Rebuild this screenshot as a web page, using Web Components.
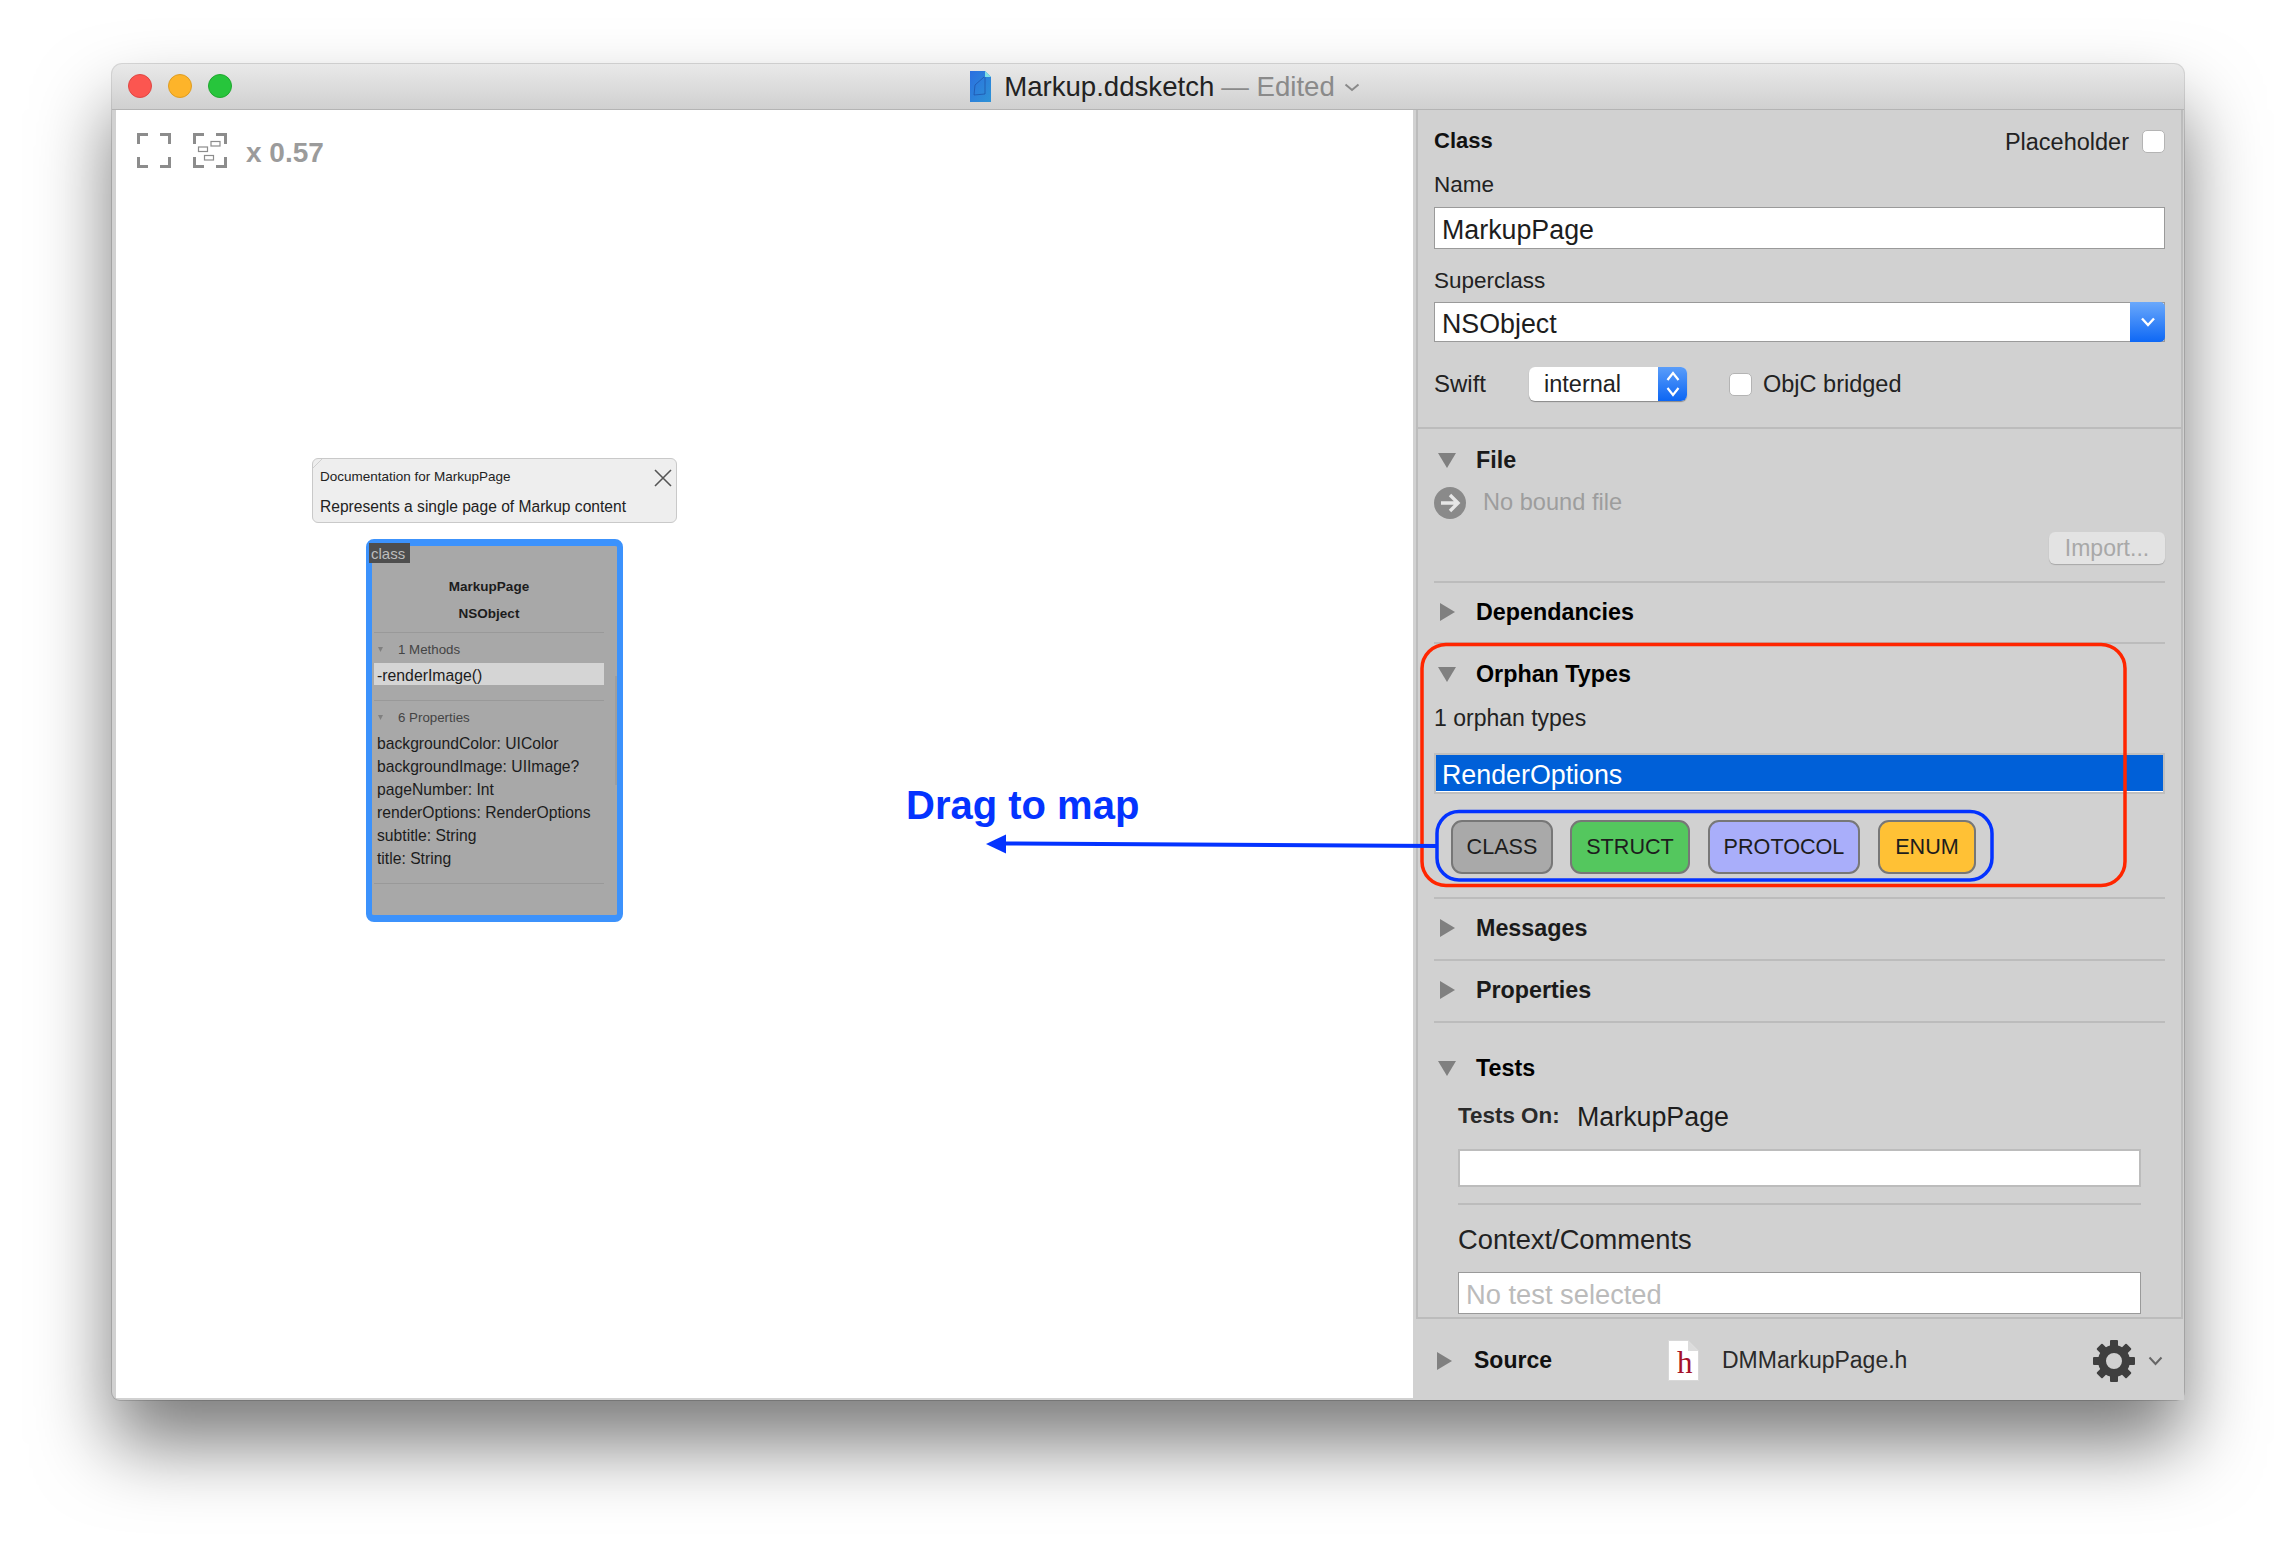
<!doctype html>
<html>
<head>
<meta charset="utf-8">
<title>Markup.ddsketch</title>
<style>
  html, body { margin: 0; background: #fff; }
  body { width: 2296px; height: 1560px; overflow: hidden; position: relative; font-family: "Liberation Sans", Arial, sans-serif; color: #222; }
</style>
</head>
<body>
<mac-window>
  <map-canvas slot="canvas">
    <doc-note style="left:196px;top:348px" heading="Documentation for MarkupPage">Represents a single page of Markup content</doc-note>
    <class-card style="left:250px;top:429px"></class-card>
  </map-canvas>
  <inspector-panel slot="panel"></inspector-panel>
</mac-window>
<map-annotations></map-annotations>

<script>
const triangle = (open) => open
  ? `<svg width="18" height="15" viewBox="0 0 18 15"><path d="M0 0H18L9 15Z" fill="#808080"/></svg>`
  : `<svg width="18" height="18" viewBox="0 0 18 18"><path d="M2 0L17 9L2 18Z" fill="#808080"/></svg>`;

class MacWindow extends HTMLElement {
  connectedCallback() {
    this.attachShadow({ mode: "open" });
    this.shadowRoot.innerHTML = `
      <style>
        :host {
          display: flex;
          flex-direction: column;
          box-sizing: border-box;
          position: absolute;
          left: 112px;
          top: 64px;
          width: 2072px;
          height: 1336px;
          background: #d1d1d1;
          border-radius: 10px 10px 8px 8px;
          box-shadow: 0 0 0 1px rgba(0, 0, 0, 0.14), 0 44px 76px rgba(0, 0, 0, 0.52);
          overflow: visible;
        }
        #bar {
          height: 46px;
          flex: none;
          display: flex;
          align-items: center;
          justify-content: center;
          position: relative;
          background: linear-gradient(#e9e9e9, #d0d0d0);
          border-radius: 10px 10px 0 0;
          border-bottom: 1px solid #b4b4b4;
          box-sizing: border-box;
          font-size: 27.6px;
          color: #222;
        }
        #lights {
          position: absolute;
          left: 16px;
          top: 10px;
          display: flex;
          gap: 16px;
        }
        #lights i {
          width: 24px;
          height: 24px;
          box-sizing: border-box;
          border-radius: 50%;
          border: 1px solid var(--edge);
          background: var(--fill);
        }
        #title {
          display: flex;
          align-items: center;
          margin-left: 34px;
        }
        #title svg.doc { margin-right: 13px; }
        #title .edited { color: #8a8a8a; margin-left: 7px; }
        #title svg.more { margin-left: 9px; margin-top: 2px; }
        #main {
          flex: 1;
          display: flex;
          min-height: 0;
          padding-left: 4px;
        }
        ::slotted([slot="canvas"]) { flex: none; }
        ::slotted([slot="panel"]) { flex: 1; }
      </style>
      <div id="bar">
        <div id="lights">
          <i style="--fill:#fc5650;--edge:#df4744"></i>
          <i style="--fill:#fdb42a;--edge:#de9d22"></i>
          <i style="--fill:#27c53c;--edge:#1fa82f"></i>
        </div>
        <div id="title">
          <svg class="doc" width="21" height="31" viewBox="0 0 21 31">
            <defs><linearGradient id="docfill" x1="0" y1="0" x2="1" y2="1"><stop offset="0" stop-color="#2b6fe0"/><stop offset="1" stop-color="#2d93d6"/></linearGradient></defs>
            <path d="M0 0H15L21 6V31H0Z" fill="url(#docfill)"/>
            <path d="M15 0L21 6H15Z" fill="#7fe0e4"/>
            <path d="M14 6L5 14L4 24L15 23L15 6" fill="none" stroke="#1d4fa5" stroke-width=".7"/>
          </svg>
          <span>Markup.ddsketch</span><span class="edited">— Edited</span>
          <svg class="more" width="16" height="9" viewBox="0 0 16 9"><path d="M1.5 1.5L8 7L14.5 1.5" fill="none" stroke="#8a8a8a" stroke-width="2"/></svg>
        </div>
      </div>
      <div id="main">
        <slot name="canvas"></slot>
        <slot name="panel"></slot>
      </div>
    `;
  }
}

class MapCanvas extends HTMLElement {
  connectedCallback() {
    this.attachShadow({ mode: "open" });
    const corners = `<path d="M1.5 11V1.5H11M23 1.5H32.5V11M1.5 24V33.5H11M23 33.5H32.5V24" fill="none" stroke="#8c8c8c" stroke-width="3"/>`;
    this.shadowRoot.innerHTML = `
      <style>
        :host {
          display: block;
          position: relative;
          width: 1297px;
          height: 1288px;
          background: #fff;
        }
        #tools {
          display: flex;
          align-items: center;
          gap: 22px;
          padding: 22px 0 0 21px;
        }
        #zoom {
          font: bold 28px "Liberation Sans", Arial, sans-serif;
          color: #9b9b9b;
          margin-left: -3px;
          margin-top: 5px;
        }
      </style>
      <div id="tools">
        <svg width="34" height="35" viewBox="0 0 34 35">${corners}</svg>
        <svg width="34" height="35" viewBox="0 0 34 35">${corners}
          <g fill="#fff" stroke="#8c8c8c" stroke-width="1.2">
            <rect x="5.5" y="14" width="9" height="4.5"/>
            <rect x="18" y="8.5" width="9" height="4.5"/>
            <rect x="11.5" y="22.5" width="9" height="4.5"/>
          </g>
        </svg>
        <span id="zoom">x 0.57</span>
      </div>
      <slot></slot>
    `;
  }
}

class DocNote extends HTMLElement {
  connectedCallback() {
    this.attachShadow({ mode: "open" });
    this.shadowRoot.innerHTML = `
      <style>
        :host {
          display: block;
          position: absolute;
          box-sizing: border-box;
          width: 365px;
          height: 65px;
          padding: 9px 7px 0;
          background: #eeeeee;
          border: 1px solid #c9c9c9;
          border-radius: 6px;
          color: #222;
        }
        #head { font-size: 13.5px; line-height: 18px; }
        #body { font-size: 15.6px; line-height: 20px; margin-top: 11px; }
        #close { position: absolute; right: 4px; top: 10px; }
        #fold { position: absolute; left: 0; top: 0; }
      </style>
      <svg id="fold" width="10" height="10" viewBox="0 0 10 10"><path d="M0 9L9 0" stroke="#cfcfcf"/></svg>
      <div id="head">${this.getAttribute("heading")}</div>
      <div id="body"><slot></slot></div>
      <svg id="close" width="18" height="18" viewBox="0 0 18 18"><path d="M1 1L17 17M17 1L1 17" stroke="#555" stroke-width="1.6"/></svg>
    `;
  }
}

class ClassCard extends HTMLElement {
  connectedCallback() {
    this.attachShadow({ mode: "open" });
    const props = ["backgroundColor: UIColor", "backgroundImage: UIImage?", "pageNumber: Int", "renderOptions: RenderOptions", "subtitle: String", "title: String"];
    const tri = `<svg width="5" height="5" viewBox="0 0 5 5"><path d="M0 0H5L2.5 5Z" fill="#808080"/></svg>`;
    this.shadowRoot.innerHTML = `
      <style>
        :host {
          display: block;
          position: absolute;
          box-sizing: border-box;
          width: 257px;
          height: 383px;
          padding: 28px 13px 0 2px;
          background: #a8a8a8;
          border: solid #3c92fc;
          border-width: 7px 6px;
          border-radius: 8px;
          color: #1c1c1c;
        }
        #tag {
          position: absolute;
          left: -3px;
          top: -3px;
          padding: 0 2px;
          width: 37px;
          height: 20px;
          font-size: 15px;
          line-height: 21px;
          color: #bdbdbd;
          background: #4e4e4e;
        }
        .name { font: bold 13.5px/26px "Liberation Sans", Arial, sans-serif; text-align: center; }
        hr { margin: 0; border: 0; height: 1px; background: #999; }
        .group {
          display: flex;
          align-items: center;
          height: 20px;
          font-size: 13.3px;
          color: #444;
          margin-top: 6px;
          margin-bottom: 1px;
          padding-left: 4px;
          gap: 15px;
        }
        #method {
          margin-top: 4px;
          height: 22px;
          line-height: 25px;
          padding-left: 3px;
          font-size: 15.8px;
          background: #d5d5d5;
        }
        #props { margin-top: 5px; padding-left: 3px; font-size: 15.7px; line-height: 23px; }
        #scroll {
          position: absolute;
          left: 243px;
          top: 130px;
          width: 2px;
          height: 109px;
          background: #9e9e9e;
        }
      </style>
      <div id="tag">class</div>
      <div class="name">MarkupPage</div>
      <div class="name" style="padding-top:1px;margin-bottom:-1px">NSObject</div>
      <hr style="margin-top:6px">
      <div class="group">${tri}<span>1 Methods</span></div>
      <div id="method">-renderImage()</div>
      <hr style="margin-top:15px">
      <div class="group">${tri}<span>6 Properties</span></div>
      <div id="props">${props.map((p) => `<div>${p}</div>`).join("")}</div>
      <hr style="margin-top:13px">
      <div id="scroll"></div>
    `;
  }
}

class InspSection extends HTMLElement {
  connectedCallback() {
    this.attachShadow({ mode: "open" });
    const open = this.hasAttribute("open");
    this.shadowRoot.innerHTML = `
      <style>
        :host {
          display: block;
          box-sizing: border-box;
          padding: var(--top, 15px) 0 var(--bottom, 15px);
          margin: 0 16px;
          border-bottom: 2px solid #bcbcbc;
        }
        :host([last]) { border-bottom: 0; }
        #head {
          display: flex;
          align-items: center;
          box-sizing: border-box;
          height: 30px;
          padding-bottom: 2px;
          font: bold 23.3px "Liberation Sans", Arial, sans-serif;
          color: var(--label, #1a1a1a);
        }
        #tri { width: 42px; padding-left: 4px; box-sizing: border-box; display: flex; }
      </style>
      <div id="head"><span id="tri">${triangle(open)}</span>${this.getAttribute("label")}</div>
      <slot></slot>
    `;
  }
}

class TypeChip extends HTMLElement {
  connectedCallback() {
    this.attachShadow({ mode: "open" });
    this.shadowRoot.innerHTML = `
      <style>
        :host {
          display: flex;
          align-items: center;
          justify-content: center;
          box-sizing: border-box;
          height: 54px;
          border: 2px solid #777;
          border-radius: 11px;
          font-size: 21.6px;
          color: #1d1d1d;
          background: var(--fill);
          width: var(--w);
        }
      </style>
      <slot></slot>
    `;
  }
}

class CheckField extends HTMLElement {
  connectedCallback() {
    this.attachShadow({ mode: "open" });
    this.shadowRoot.innerHTML = `
      <style>
        :host { display: flex; align-items: center; gap: 11px; font-size: 23.5px; color: #222; }
        i {
          width: 23px;
          height: 23px;
          box-sizing: border-box;
          background: #fff;
          border: 1px solid #b4b4b4;
          border-radius: 5px;
        }
      </style>
      <slot name="before"></slot><i></i><slot></slot>
    `;
  }
}

class InspectorPanel extends HTMLElement {
  connectedCallback() {
    this.attachShadow({ mode: "open" });
    const gear = Array.from({ length: 8 }, (_, i) =>
      `<rect x="17" y="0" width="8" height="9" rx="1" transform="rotate(${i * 45} 21 21)"/>`).join("");
    this.shadowRoot.innerHTML = `
      <style>
        :host {
          display: flex;
          flex-direction: column;
          font-family: "Liberation Sans", Arial, sans-serif;
          background: #d1d1d1;
          color: #222;
          min-width: 0;
        }
        #scroll {
          height: 1209px;
          flex: none;
          overflow: hidden;
          box-sizing: border-box;
          margin: 0 1px 0 3px;
          border: 2px solid #bcbcbc;
          border-width: 0 2px 2px;
        }
        #head {
          height: 319px;
          box-sizing: border-box;
          padding-top: 19px;
          border-bottom: 2px solid #bcbcbc;
        }
        .pad { padding: 0 16px; }
        .rowhead { display: flex; justify-content: space-between; align-items: center; height: 24px; }
        .rowhead b { font-size: 22px; color: #111; }
        .rowhead span { margin-top: 2px; margin-right: 2px; }
        .label { font-size: 22.5px; line-height: 24px; height: 24px; }
        .field {
          box-sizing: border-box;
          display: flex;
          align-items: center;
          background: #fff;
          border: 1px solid #9a9a9a;
          padding: 5px 0 0 7px;
          font-size: 26.8px;
          color: #1d1d1d;
        }
        #combo { height: 40px; padding: 0; position: relative; }
        #combo span { padding: 5px 0 0 7px; }
        #combo i {
          position: absolute;
          right: -1px;
          top: -1px;
          bottom: -1px;
          width: 35px;
          display: flex;
          align-items: center;
          justify-content: center;
          border-radius: 0 5px 5px 0;
          background: linear-gradient(#6aa8fb, #0e68f5);
        }
        #swift { display: flex; align-items: center; margin-top: 25px; height: 34px; font-size: 23.5px; }
        #swift .name { width: 95px; font-size: 24px; }
        #popup {
          width: 158px;
          height: 34px;
          box-sizing: border-box;
          display: flex;
          align-items: center;
          justify-content: space-between;
          padding-left: 15px;
          background: #fff;
          border-radius: 6px;
          box-shadow: 0 1px 1px rgba(0, 0, 0, 0.35);
          overflow: hidden;
        }
        #popup i {
          width: 29px;
          height: 34px;
          display: flex;
          align-items: center;
          justify-content: center;
          background: linear-gradient(#5a9df9, #0c66f4);
        }
        #nofile { display: flex; align-items: center; gap: 17px; margin-top: 11px; height: 32px; font-size: 23.6px; color: #9d9d9d; }
        #nofile span { margin-top: -2px; }
        #importrow { display: flex; justify-content: flex-end; margin-top: 13px; }
        #import {
          width: 116px;
          height: 32px;
          display: flex;
          align-items: center;
          justify-content: center;
          font-size: 23px;
          color: #a8a8a8;
          background: #e3e3e3;
          border-radius: 6px;
          box-shadow: 0 1px 1px rgba(0, 0, 0, 0.2);
        }
        #count { font-size: 23px; line-height: 24px; margin-top: 16px; }
        #list {
          margin-top: 23px;
          height: 41px;
          box-sizing: border-box;
          border: 2px solid #bfbfbf;
          background: #fff;
        }
        #list div {
          height: 36px;
          box-sizing: border-box;
          padding: 3px 0 0 6px;
          line-height: 34px;
          font-size: 26.8px;
          color: #fff;
          background: #0060d8;
        }
        #chips { display: flex; margin: 26px 0 0 17px; }
        #testson { display: flex; align-items: center; margin: 17px 0 0 24px; height: 32px; }
        #testson b { font-size: 22.4px; font-weight: bold; color: #2a2a2a; width: 119px; margin-top: -3px; }
        #testson span { font-size: 26.8px; color: #1d1d1d; }
        .wide { margin-left: 24px; margin-right: 24px; }
        #blank { height: 38px; margin-top: 16px; background: #fff; border: 2px solid #bcbcbc; box-sizing: border-box; }
        #rule { height: 2px; margin-top: 16px; background: #bcbcbc; }
        #context { font-size: 27.3px; line-height: 30px; margin-top: 20px; }
        #notest { height: 42px; margin-top: 17px; padding-top: 3px; color: #bbbbbb; font-size: 27.3px; }
        #source {
          flex: 1;
          display: flex;
          align-items: center;
          box-sizing: border-box;
          padding: 2px 0 0 24px;
          font-size: 23px;
          color: #2a2a2a;
        }
        #source .tri { width: 15px; display: flex; margin-right: 22px; }
        #source b { color: #111; width: 194px; }
        #hfile { position: relative; width: 31px; height: 41px; margin-right: 23px; }
        #hfile span {
          position: absolute;
          left: 9px;
          top: 7px;
          font: 31px/32px "Liberation Serif", "Times New Roman", serif;
          color: #a5122a;
        }
        #gear { margin-left: auto; margin-right: 13px; }
        #gearmore { margin-right: 21px; }
      </style>
      <div id="scroll">
        <div id="head">
          <div class="pad">
            <div class="rowhead">
              <b>Class</b>
              <check-field><span slot="before">Placeholder</span></check-field>
            </div>
            <div class="label" style="margin-top:20px">Name</div>
            <div class="field" style="height:42px;margin-top:10px">MarkupPage</div>
            <div class="label" style="margin-top:20px">Superclass</div>
            <div class="field" id="combo" style="margin-top:9px">
              <span>NSObject</span>
              <i><svg width="16" height="10" viewBox="0 0 16 10"><path d="M2 1.5L8 8L14 1.5" fill="none" stroke="#fff" stroke-width="2.4"/></svg></i>
            </div>
            <div id="swift">
              <span class="name">Swift</span>
              <div id="popup"><span>internal</span><i>
                <svg width="14" height="28" viewBox="0 0 14 28"><path d="M1.5 10L7 3L12.5 10M1.5 18L7 25L12.5 18" fill="none" stroke="#fff" stroke-width="2.2"/></svg>
              </i></div>
              <check-field style="margin-left:42px">ObjC bridged</check-field>
            </div>
          </div>
        </div>
        <insp-section label="File" open style="--top:17px;--bottom:17px">
          <div id="nofile">
            <svg width="32" height="32" viewBox="0 0 32 32"><circle cx="16" cy="16" r="16" fill="#8a8a8a"/><path d="M7 16H24M16 8L24 16L16 24" fill="none" stroke="#e6e6e6" stroke-width="3.4"/></svg>
            <span>No bound file</span>
          </div>
          <div id="importrow"><div id="import">Import...</div></div>
        </insp-section>
        <insp-section label="Dependancies" style="--bottom:14px;--label:#000"></insp-section>
        <insp-section label="Orphan Types" open style="--top:16px;--bottom:23px;--label:#000">
          <div id="count">1 orphan types</div>
          <div id="list"><div>RenderOptions</div></div>
          <div id="chips">
            <type-chip style="--fill:#a9a9a9;--w:102px">CLASS</type-chip>
            <type-chip style="--fill:#54c75e;--w:120px;margin-left:17px">STRUCT</type-chip>
            <type-chip style="--fill:#a9aefa;--w:152px;margin-left:18px">PROTOCOL</type-chip>
            <type-chip style="--fill:#ffc135;--w:98px;margin-left:18px">ENUM</type-chip>
          </div>
        </insp-section>
        <insp-section label="Messages"></insp-section>
        <insp-section label="Properties"></insp-section>
        <insp-section label="Tests" open last style="--top:31px;--label:#000">
          <div id="testson"><b>Tests On:</b><span>MarkupPage</span></div>
          <div class="wide" id="blank"></div>
          <div class="wide" id="rule"></div>
          <div class="wide" id="context">Context/Comments</div>
          <div class="wide field" id="notest">No test selected</div>
        </insp-section>
      </div>
      <div id="source">
        <span class="tri"><svg width="15" height="18" viewBox="0 0 15 18"><path d="M0 0L15 9L0 18Z" fill="#808080"/></svg></span>
        <b>Source</b>
        <div id="hfile">
          <svg width="31" height="41" viewBox="0 0 31 41"><path d="M.5.5H20L30.5 11V40.5H.5Z" fill="#fff" stroke="#d8d8d8"/><path d="M20 .5V11H30.5Z" fill="#dcdcdc"/></svg>
          <span>h</span>
        </div>
        <span>DMMarkupPage.h</span>
        <svg id="gear" width="42" height="42" viewBox="0 0 42 42">
          <g fill="#3f3f3f">${gear}</g>
          <circle cx="21" cy="21" r="12" fill="none" stroke="#3f3f3f" stroke-width="8"/>
        </svg>
        <svg id="gearmore" width="15" height="10" viewBox="0 0 15 10"><path d="M1.5 1.5L7.5 8L13.5 1.5" fill="none" stroke="#666" stroke-width="2"/></svg>
      </div>
    `;
  }
}

// red and blue markup drawn over the screenshot
class MapAnnotations extends HTMLElement {
  connectedCallback() {
    this.attachShadow({ mode: "open" });
    this.shadowRoot.innerHTML = `
      <style>
        :host { display: block; position: absolute; left: 0; top: 0; width: 2296px; height: 1560px; pointer-events: none; }
        svg { position: absolute; left: 0; top: 0; }
        #drag {
          position: absolute;
          left: 906px;
          top: 782px;
          font: bold 40px/46px "Liberation Sans", Arial, sans-serif;
          color: #0433ff;
          white-space: nowrap;
        }
      </style>
      <svg width="2296" height="1560" viewBox="0 0 2296 1560" fill="none">
        <rect x="1422" y="644.5" width="703" height="241" rx="24" stroke="#ff2600" stroke-width="3.5"/>
        <path d="M1000 843.5L1438 846" stroke="#0433ff" stroke-width="4"/>
        <path d="M986 844L1006 834.5V853.5Z" fill="#0433ff"/>
        <rect x="1437" y="811.5" width="555" height="68.5" rx="22" stroke="#0433ff" stroke-width="3.5"/>
      </svg>
      <div id="drag">Drag to map</div>
    `;
  }
}

customElements.define("mac-window", MacWindow);
customElements.define("map-canvas", MapCanvas);
customElements.define("doc-note", DocNote);
customElements.define("class-card", ClassCard);
customElements.define("insp-section", InspSection);
customElements.define("type-chip", TypeChip);
customElements.define("check-field", CheckField);
customElements.define("inspector-panel", InspectorPanel);
customElements.define("map-annotations", MapAnnotations);
</script>
</body>
</html>
